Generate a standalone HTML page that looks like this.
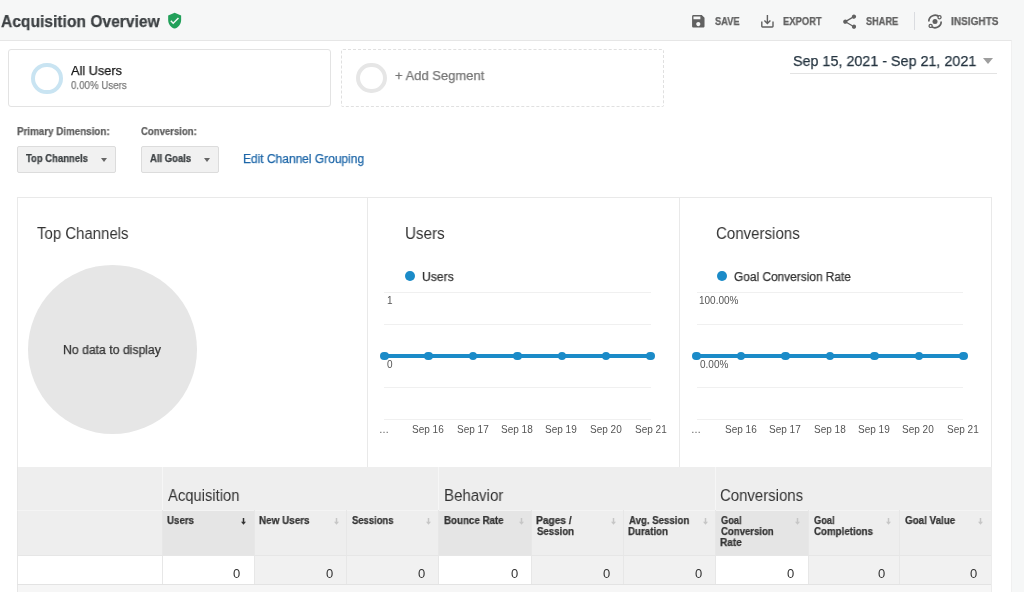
<!DOCTYPE html><html><head><meta charset="utf-8"><title>Acquisition Overview</title><style>
*{margin:0;padding:0;box-sizing:border-box}
html,body{width:1024px;height:592px;overflow:hidden;background:#f6f7f7;font-family:"Liberation Sans", sans-serif;position:relative}
.a{position:absolute}
.t{position:absolute;white-space:nowrap;line-height:0;will-change:transform}
.s{-webkit-text-stroke:0.25px currentColor}
.r{position:absolute;border-radius:50%}
</style></head><body>
<div class="a" style="left:0;top:40px;width:1012px;height:552px;background:#fff;border-top:1px solid #e6e6e6;border-right:1px solid #f0f0f0"></div>
<svg class="a" style="left:165.8px;top:12.1px" width="17.3" height="17.3" viewBox="0 0 24 24"><path fill="#22a05a" d="M12 1L3 5v6c0 5.55 3.84 10.74 9 12 5.16-1.26 9-6.45 9-12V5l-9-4zm-2 16l-4-4 1.41-1.41L10 14.17l6.59-6.59L18 9l-8 8z"/></svg>
<svg class="a" style="left:690.4px;top:12.7px" width="16.6" height="16.6" viewBox="0 0 24 24"><path fill="#616161" d="M17 3H5c-1.11 0-2 .9-2 2v14c0 1.1.89 2 2 2h14c1.1 0 2-.9 2-2V7l-4-4zm-5 16c-1.66 0-3-1.34-3-3s1.34-3 3-3 3 1.34 3 3-1.34 3-3 3zm3-10H5V5h10v4z"/></svg>
<svg class="a" style="left:759.1px;top:12.5px" width="16.8" height="16.8" viewBox="0 0 24 24"><path fill="#616161" d="M19 12v7H5v-7H3v7c0 1.1.9 2 2 2h14c1.1 0 2-.9 2-2v-7h-2zm-6 .67l2.59-2.58L17 11.5l-5 5-5-5 1.41-1.41L11 12.67V3h2z"/></svg>
<svg class="a" style="left:840.8px;top:12.8px" width="17.3" height="17.3" viewBox="0 0 24 24"><path fill="#616161" d="M18 16.08c-.76 0-1.44.3-1.96.77L8.91 12.7c.05-.23.09-.46.09-.7s-.04-.47-.09-.7l7.05-4.11c.54.5 1.25.81 2.04.81 1.66 0 3-1.34 3-3s-1.34-3-3-3-3 1.34-3 3c0 .24.04.47.09.7L8.04 9.81C7.5 9.31 6.79 9 6 9c-1.66 0-3 1.34-3 3s1.34 3 3 3c.79 0 1.5-.31 2.04-.81l7.12 4.16c-.05.21-.08.43-.08.65 0 1.61 1.31 2.92 2.92 2.92 1.61 0 2.92-1.31 2.92-2.92s-1.31-2.92-2.92-2.92z"/></svg>
<div class="a" style="left:914px;top:12px;width:1px;height:18px;background:#dadce0"></div>
<svg class="a" style="left:927.2px;top:13.7px" width="16" height="15" viewBox="0 0 16 15"><circle cx="8" cy="7.5" r="2.5" fill="#616161"/><path d="M1.8 7.5A6.2 6.2 0 0 1 12.53 3.27M14.2 7.5A6.2 6.2 0 0 1 3.62 11.88" fill="none" stroke="#616161" stroke-width="1.7"/><circle cx="12.53" cy="3.27" r="1.55" fill="#f6f7f7" stroke="#616161" stroke-width="1.3"/><circle cx="3.62" cy="11.88" r="1.55" fill="#f6f7f7" stroke="#616161" stroke-width="1.3"/></svg>
<div class="a" style="left:8px;top:49px;width:323px;height:58px;border:1px solid #e3e3e3;border-radius:3px;background:#fff"></div>
<div class="r" style="left:31.3px;top:62.6px;width:31.4px;height:31.4px;border:4px solid #c9e4f2"></div>
<div class="a" style="left:341px;top:49px;width:323px;height:58px;border:1px dashed #e0e0e0;border-radius:2px"></div>
<div class="r" style="left:356.3px;top:62.7px;width:30.8px;height:30.8px;border:4px solid #e6e6e6"></div>
<div class="a" style="left:983.4px;top:58px;width:0;height:0;border-left:5px solid transparent;border-right:5px solid transparent;border-top:6px solid #9e9e9e"></div>
<div class="a" style="left:790px;top:73px;width:207px;height:1px;background:#e3e3e3"></div>
<div class="a" style="left:17px;top:146px;width:99px;height:27px;background:#f1f1f1;border:1px solid #dcdcdc;border-radius:2px"></div>
<div class="a" style="left:101.2px;top:157.8px;width:0;height:0;border-left:3.5px solid transparent;border-right:3.5px solid transparent;border-top:4.3px solid #666"></div>
<div class="a" style="left:141px;top:146px;width:78px;height:27px;background:#f1f1f1;border:1px solid #dcdcdc;border-radius:2px"></div>
<div class="a" style="left:203.8px;top:157.8px;width:0;height:0;border-left:3.5px solid transparent;border-right:3.5px solid transparent;border-top:4.3px solid #666"></div>
<div class="a" style="left:17px;top:197px;width:975px;height:271px;border:1px solid #e9e9e9;background:#fff"></div>
<div class="a" style="left:367px;top:197px;width:1px;height:271px;background:#e9e9e9"></div>
<div class="a" style="left:679px;top:197px;width:1px;height:271px;background:#e9e9e9"></div>
<div class="r" style="left:28px;top:265.2px;width:169px;height:169px;background:#e6e6e6"></div>
<div class="r" style="left:405.2px;top:271.3px;width:9.8px;height:9.8px;background:#1b8bc8"></div>
<div class="r" style="left:717.1px;top:271.3px;width:9.8px;height:9.8px;background:#1b8bc8"></div>
<div class="a" style="left:384px;top:292px;width:267px;height:1px;background:#f0f0f0"></div>
<div class="a" style="left:384px;top:324px;width:267px;height:1px;background:#f0f0f0"></div>
<div class="a" style="left:384px;top:387px;width:267px;height:1px;background:#f0f0f0"></div>
<div class="a" style="left:384px;top:419px;width:267px;height:1px;background:#f0f0f0"></div>
<div class="a" style="left:696.6px;top:292px;width:266.79999999999995px;height:1px;background:#f0f0f0"></div>
<div class="a" style="left:696.6px;top:324px;width:266.79999999999995px;height:1px;background:#f0f0f0"></div>
<div class="a" style="left:696.6px;top:387px;width:266.79999999999995px;height:1px;background:#f0f0f0"></div>
<div class="a" style="left:696.6px;top:419px;width:266.79999999999995px;height:1px;background:#f0f0f0"></div>
<div class="a" style="left:384.4px;top:354px;width:266.1px;height:4px;background:#1b8bc8"></div>
<div class="r" style="left:380.09999999999997px;top:351.7px;width:8.6px;height:8.6px;background:#1b8bc8"></div>
<div class="r" style="left:424.45px;top:351.7px;width:8.6px;height:8.6px;background:#1b8bc8"></div>
<div class="r" style="left:468.79999999999995px;top:351.7px;width:8.6px;height:8.6px;background:#1b8bc8"></div>
<div class="r" style="left:513.1500000000001px;top:351.7px;width:8.6px;height:8.6px;background:#1b8bc8"></div>
<div class="r" style="left:557.5px;top:351.7px;width:8.6px;height:8.6px;background:#1b8bc8"></div>
<div class="r" style="left:601.85px;top:351.7px;width:8.6px;height:8.6px;background:#1b8bc8"></div>
<div class="r" style="left:646.2px;top:351.7px;width:8.6px;height:8.6px;background:#1b8bc8"></div>
<div class="a" style="left:696.6px;top:354px;width:266.82000000000005px;height:4px;background:#1b8bc8"></div>
<div class="r" style="left:692.3000000000001px;top:351.7px;width:8.6px;height:8.6px;background:#1b8bc8"></div>
<div class="r" style="left:736.7700000000001px;top:351.7px;width:8.6px;height:8.6px;background:#1b8bc8"></div>
<div class="r" style="left:781.24px;top:351.7px;width:8.6px;height:8.6px;background:#1b8bc8"></div>
<div class="r" style="left:825.71px;top:351.7px;width:8.6px;height:8.6px;background:#1b8bc8"></div>
<div class="r" style="left:870.1800000000001px;top:351.7px;width:8.6px;height:8.6px;background:#1b8bc8"></div>
<div class="r" style="left:914.6500000000001px;top:351.7px;width:8.6px;height:8.6px;background:#1b8bc8"></div>
<div class="r" style="left:959.1200000000001px;top:351.7px;width:8.6px;height:8.6px;background:#1b8bc8"></div>
<div class="a" style="left:17px;top:467px;width:975px;height:125px;background:#f6f6f6;border-left:1px solid #e6e6e6"></div>
<div class="a" style="left:17px;top:467px;width:975px;height:43px;background:#eeeeee;border-left:1px solid #e6e6e6"></div>
<div class="a" style="left:17px;top:510px;width:145px;height:45px;background:#eeeeee;border-left:1px solid #e6e6e6;border-top:1px solid #f4f4f4"></div>
<div class="a" style="left:17px;top:556px;width:145px;height:28px;background:#fff;border-left:1px solid #e6e6e6"></div>
<div class="a" style="left:162px;top:467px;width:1px;height:43px;background:#f6f6f6"></div>
<div class="a" style="left:438px;top:467px;width:1px;height:43px;background:#f6f6f6"></div>
<div class="a" style="left:715px;top:467px;width:1px;height:43px;background:#f6f6f6"></div>
<div class="a" style="left:162px;top:510px;width:92px;height:45px;background:#e5e5e5;border-top:1px solid #f4f4f4"></div>
<div class="a" style="left:162px;top:556px;width:92px;height:28px;background:#ffffff"></div>
<div class="a" style="left:162px;top:510px;width:1px;height:74px;background:#e7e7e7"></div>
<svg class="a" style="left:241.3px;top:518px" width="5" height="7" viewBox="0 0 5 7"><path d="M1.75 0h1.5v3.8H5L2.5 6.8 0 3.8h1.75z" fill="#333"/></svg>
<div class="a" style="left:254px;top:510px;width:92px;height:45px;background:#eeeeee;border-top:1px solid #f4f4f4"></div>
<div class="a" style="left:254px;top:556px;width:92px;height:28px;background:#f1f1f1"></div>
<div class="a" style="left:254px;top:510px;width:1px;height:74px;background:#e7e7e7"></div>
<svg class="a" style="left:333.5px;top:518px" width="5" height="7" viewBox="0 0 5 7"><path d="M1.75 0h1.5v3.8H5L2.5 6.8 0 3.8h1.75z" fill="#c6c6c6"/></svg>
<div class="a" style="left:346px;top:510px;width:92px;height:45px;background:#eeeeee;border-top:1px solid #f4f4f4"></div>
<div class="a" style="left:346px;top:556px;width:92px;height:28px;background:#f1f1f1"></div>
<div class="a" style="left:346px;top:510px;width:1px;height:74px;background:#e7e7e7"></div>
<svg class="a" style="left:425.6px;top:518px" width="5" height="7" viewBox="0 0 5 7"><path d="M1.75 0h1.5v3.8H5L2.5 6.8 0 3.8h1.75z" fill="#c6c6c6"/></svg>
<div class="a" style="left:438px;top:510px;width:93px;height:45px;background:#e5e5e5;border-top:1px solid #f4f4f4"></div>
<div class="a" style="left:438px;top:556px;width:93px;height:28px;background:#ffffff"></div>
<div class="a" style="left:438px;top:510px;width:1px;height:74px;background:#e7e7e7"></div>
<svg class="a" style="left:518.5px;top:518px" width="5" height="7" viewBox="0 0 5 7"><path d="M1.75 0h1.5v3.8H5L2.5 6.8 0 3.8h1.75z" fill="#c6c6c6"/></svg>
<div class="a" style="left:531px;top:510px;width:92px;height:45px;background:#eeeeee;border-top:1px solid #f4f4f4"></div>
<div class="a" style="left:531px;top:556px;width:92px;height:28px;background:#f1f1f1"></div>
<div class="a" style="left:531px;top:510px;width:1px;height:74px;background:#e7e7e7"></div>
<svg class="a" style="left:610.5px;top:518px" width="5" height="7" viewBox="0 0 5 7"><path d="M1.75 0h1.5v3.8H5L2.5 6.8 0 3.8h1.75z" fill="#c6c6c6"/></svg>
<div class="a" style="left:623px;top:510px;width:92px;height:45px;background:#eeeeee;border-top:1px solid #f4f4f4"></div>
<div class="a" style="left:623px;top:556px;width:92px;height:28px;background:#f1f1f1"></div>
<div class="a" style="left:623px;top:510px;width:1px;height:74px;background:#e7e7e7"></div>
<svg class="a" style="left:702.5999999999999px;top:518px" width="5" height="7" viewBox="0 0 5 7"><path d="M1.75 0h1.5v3.8H5L2.5 6.8 0 3.8h1.75z" fill="#c6c6c6"/></svg>
<div class="a" style="left:715px;top:510px;width:93px;height:45px;background:#e5e5e5;border-top:1px solid #f4f4f4"></div>
<div class="a" style="left:715px;top:556px;width:93px;height:28px;background:#ffffff"></div>
<div class="a" style="left:715px;top:510px;width:1px;height:74px;background:#e7e7e7"></div>
<svg class="a" style="left:795.1999999999999px;top:518px" width="5" height="7" viewBox="0 0 5 7"><path d="M1.75 0h1.5v3.8H5L2.5 6.8 0 3.8h1.75z" fill="#c6c6c6"/></svg>
<div class="a" style="left:808px;top:510px;width:91px;height:45px;background:#eeeeee;border-top:1px solid #f4f4f4"></div>
<div class="a" style="left:808px;top:556px;width:91px;height:28px;background:#f1f1f1"></div>
<div class="a" style="left:808px;top:510px;width:1px;height:74px;background:#e7e7e7"></div>
<svg class="a" style="left:886.0999999999999px;top:518px" width="5" height="7" viewBox="0 0 5 7"><path d="M1.75 0h1.5v3.8H5L2.5 6.8 0 3.8h1.75z" fill="#c6c6c6"/></svg>
<div class="a" style="left:899px;top:510px;width:92px;height:45px;background:#eeeeee;border-top:1px solid #f4f4f4"></div>
<div class="a" style="left:899px;top:556px;width:92px;height:28px;background:#f1f1f1"></div>
<div class="a" style="left:899px;top:510px;width:1px;height:74px;background:#e7e7e7"></div>
<svg class="a" style="left:978.0999999999999px;top:518px" width="5" height="7" viewBox="0 0 5 7"><path d="M1.75 0h1.5v3.8H5L2.5 6.8 0 3.8h1.75z" fill="#c6c6c6"/></svg>
<div class="a" style="left:17px;top:555px;width:975px;height:1px;background:#e6e6e6"></div>
<div class="a" style="left:17px;top:584px;width:975px;height:1px;background:#e3e3e3"></div>
<div class="a" style="left:991px;top:467px;width:1px;height:125px;background:#ececec"></div>
<div class="t s" style="left:1.40px;top:21px;font-size:16.5px;font-weight:bold;color:#3c4043;transform:scaleX(0.9458);transform-origin:0 0;">Acquisition Overview</div>
<div class="t s" style="left:715.20px;top:21px;font-size:10.5px;font-weight:bold;color:#616161;transform:scaleX(0.8857);transform-origin:0 0;">SAVE</div>
<div class="t s" style="left:783.10px;top:21px;font-size:10.5px;font-weight:bold;color:#616161;transform:scaleX(0.8952);transform-origin:0 0;">EXPORT</div>
<div class="t s" style="left:866.00px;top:21px;font-size:10.5px;font-weight:bold;color:#616161;transform:scaleX(0.8757);transform-origin:0 0;">SHARE</div>
<div class="t s" style="left:950.64px;top:21px;font-size:10.5px;font-weight:bold;color:#616161;transform:scaleX(0.9583);transform-origin:0 0;">INSIGHTS</div>
<div class="t s" style="left:70.80px;top:71px;font-size:13px;font-weight:normal;color:#151515;transform:scaleX(0.9788);transform-origin:0 0;">All Users</div>
<div class="t s" style="left:70.80px;top:85px;font-size:11px;font-weight:normal;color:#7a7a7a;transform:scaleX(0.8841);transform-origin:0 0;">0.00% Users</div>
<div class="t s" style="left:394.74px;top:76px;font-size:13.5px;font-weight:normal;color:#757575;transform:scaleX(0.9620);transform-origin:0 0;">+ Add Segment</div>
<div class="t s" style="left:793.24px;top:61px;font-size:15px;font-weight:normal;color:#24333f;transform:scaleX(0.9553);transform-origin:0 0;">Sep 15, 2021 - Sep 21, 2021</div>
<div class="t s" style="left:17.07px;top:131px;font-size:10.5px;font-weight:bold;color:#616161;transform:scaleX(0.9340);transform-origin:0 0;">Primary Dimension:</div>
<div class="t s" style="left:141.30px;top:131px;font-size:10.5px;font-weight:bold;color:#616161;transform:scaleX(0.9100);transform-origin:0 0;">Conversion:</div>
<div class="t s" style="left:26.40px;top:159px;font-size:10px;font-weight:bold;color:#3c4043;transform:scaleX(0.9477);transform-origin:0 0;">Top Channels</div>
<div class="t s" style="left:149.50px;top:159px;font-size:10px;font-weight:bold;color:#3c4043;transform:scaleX(0.9488);transform-origin:0 0;">All Goals</div>
<div class="t s" style="left:242.54px;top:159px;font-size:12.5px;font-weight:normal;color:#1d66a8;transform:scaleX(0.9576);transform-origin:0 0;">Edit Channel Grouping</div>
<div class="t" style="left:37.10px;top:234px;font-size:16px;font-weight:normal;color:#333333;transform:scaleX(0.9351);transform-origin:0 0;">Top Channels</div>
<div class="t" style="left:404.95px;top:234px;font-size:16px;font-weight:normal;color:#333333;transform:scaleX(0.9500);transform-origin:0 0;">Users</div>
<div class="t" style="left:716.36px;top:234px;font-size:16px;font-weight:normal;color:#333333;transform:scaleX(0.9409);transform-origin:0 0;">Conversions</div>
<div class="t s" style="left:63.32px;top:350px;font-size:12.5px;font-weight:normal;color:#333333;transform:scaleX(0.9788);transform-origin:0 0;">No data to display</div>
<div class="t s" style="left:421.83px;top:277px;font-size:12.5px;font-weight:normal;color:#333333;transform:scaleX(0.9710);transform-origin:0 0;">Users</div>
<div class="t s" style="left:733.85px;top:277px;font-size:12.5px;font-weight:normal;color:#333333;transform:scaleX(0.9508);transform-origin:0 0;">Goal Conversion Rate</div>
<div class="t" style="left:386.70px;top:301px;font-size:10px;font-weight:normal;color:#555555;">1</div>
<div class="t" style="left:386.90px;top:365px;font-size:10px;font-weight:normal;color:#555555;">0</div>
<div class="t" style="left:699.00px;top:301px;font-size:10px;font-weight:normal;color:#555555;">100.00%</div>
<div class="t" style="left:700.00px;top:365px;font-size:10px;font-weight:normal;color:#555555;">0.00%</div>
<div class="t" style="left:379.00px;top:430px;font-size:10px;font-weight:normal;color:#555555;">…</div>
<div class="t" style="left:412.25px;top:430px;font-size:10px;font-weight:normal;color:#555555;">Sep 16</div>
<div class="t" style="left:456.60px;top:430px;font-size:10px;font-weight:normal;color:#555555;">Sep 17</div>
<div class="t" style="left:500.95px;top:430px;font-size:10px;font-weight:normal;color:#555555;">Sep 18</div>
<div class="t" style="left:545.30px;top:430px;font-size:10px;font-weight:normal;color:#555555;">Sep 19</div>
<div class="t" style="left:589.65px;top:430px;font-size:10px;font-weight:normal;color:#555555;">Sep 20</div>
<div class="t" style="left:634.50px;top:430px;font-size:10px;font-weight:normal;color:#555555;">Sep 21</div>
<div class="t" style="left:691.20px;top:430px;font-size:10px;font-weight:normal;color:#555555;">…</div>
<div class="t" style="left:724.57px;top:430px;font-size:10px;font-weight:normal;color:#555555;">Sep 16</div>
<div class="t" style="left:769.04px;top:430px;font-size:10px;font-weight:normal;color:#555555;">Sep 17</div>
<div class="t" style="left:813.51px;top:430px;font-size:10px;font-weight:normal;color:#555555;">Sep 18</div>
<div class="t" style="left:857.98px;top:430px;font-size:10px;font-weight:normal;color:#555555;">Sep 19</div>
<div class="t" style="left:902.45px;top:430px;font-size:10px;font-weight:normal;color:#555555;">Sep 20</div>
<div class="t" style="left:947.42px;top:430px;font-size:10px;font-weight:normal;color:#555555;">Sep 21</div>
<div class="t" style="left:167.60px;top:496px;font-size:16px;font-weight:normal;color:#333333;transform:scaleX(0.9234);transform-origin:0 0;">Acquisition</div>
<div class="t" style="left:443.66px;top:496px;font-size:16px;font-weight:normal;color:#333333;transform:scaleX(0.9403);transform-origin:0 0;">Behavior</div>
<div class="t" style="left:720.27px;top:496px;font-size:16px;font-weight:normal;color:#333333;transform:scaleX(0.9341);transform-origin:0 0;">Conversions</div>
<div class="t s" style="left:166.67px;top:520px;font-size:10.5px;font-weight:bold;color:#333333;transform:scaleX(0.9250);transform-origin:0 0;">Users</div>
<div class="t" style="left:233.30px;top:574px;font-size:13px;font-weight:normal;color:#333333;">0</div>
<div class="t s" style="left:259.36px;top:520px;font-size:10.5px;font-weight:bold;color:#333333;transform:scaleX(0.9423);transform-origin:0 0;">New Users</div>
<div class="t" style="left:325.50px;top:574px;font-size:13px;font-weight:normal;color:#333333;">0</div>
<div class="t s" style="left:352.20px;top:520px;font-size:10.5px;font-weight:bold;color:#333333;transform:scaleX(0.9000);transform-origin:0 0;">Sessions</div>
<div class="t" style="left:417.60px;top:574px;font-size:13px;font-weight:normal;color:#333333;">0</div>
<div class="t s" style="left:443.67px;top:520px;font-size:10.5px;font-weight:bold;color:#333333;transform:scaleX(0.9286);transform-origin:0 0;">Bounce Rate</div>
<div class="t" style="left:510.50px;top:574px;font-size:13px;font-weight:normal;color:#333333;">0</div>
<div class="t s" style="left:535.83px;top:520px;font-size:10.5px;font-weight:bold;color:#333333;transform:scaleX(0.9722);transform-origin:0 0;">Pages /</div>
<div class="t s" style="left:536.80px;top:531px;font-size:10.5px;font-weight:bold;color:#333333;transform:scaleX(0.9200);transform-origin:0 0;">Session</div>
<div class="t" style="left:602.50px;top:574px;font-size:13px;font-weight:normal;color:#333333;">0</div>
<div class="t s" style="left:628.70px;top:520px;font-size:10.5px;font-weight:bold;color:#333333;transform:scaleX(0.9185);transform-origin:0 0;">Avg. Session</div>
<div class="t s" style="left:627.77px;top:531px;font-size:10.5px;font-weight:bold;color:#333333;transform:scaleX(0.9262);transform-origin:0 0;">Duration</div>
<div class="t" style="left:694.60px;top:574px;font-size:13px;font-weight:normal;color:#333333;">0</div>
<div class="t s" style="left:720.90px;top:520px;font-size:10.5px;font-weight:bold;color:#333333;transform:scaleX(0.8826);transform-origin:0 0;">Goal</div>
<div class="t s" style="left:720.90px;top:531px;font-size:10.5px;font-weight:bold;color:#333333;transform:scaleX(0.9123);transform-origin:0 0;">Conversion</div>
<div class="t s" style="left:719.95px;top:542px;font-size:10.5px;font-weight:bold;color:#333333;transform:scaleX(0.9545);transform-origin:0 0;">Rate</div>
<div class="t" style="left:787.20px;top:574px;font-size:13px;font-weight:normal;color:#333333;">0</div>
<div class="t s" style="left:813.50px;top:520px;font-size:10.5px;font-weight:bold;color:#333333;transform:scaleX(0.8826);transform-origin:0 0;">Goal</div>
<div class="t s" style="left:813.50px;top:531px;font-size:10.5px;font-weight:bold;color:#333333;transform:scaleX(0.9270);transform-origin:0 0;">Completions</div>
<div class="t" style="left:878.10px;top:574px;font-size:13px;font-weight:normal;color:#333333;">0</div>
<div class="t s" style="left:904.90px;top:520px;font-size:10.5px;font-weight:bold;color:#333333;transform:scaleX(0.9358);transform-origin:0 0;">Goal Value</div>
<div class="t" style="left:970.10px;top:574px;font-size:13px;font-weight:normal;color:#333333;">0</div>
</body></html>
